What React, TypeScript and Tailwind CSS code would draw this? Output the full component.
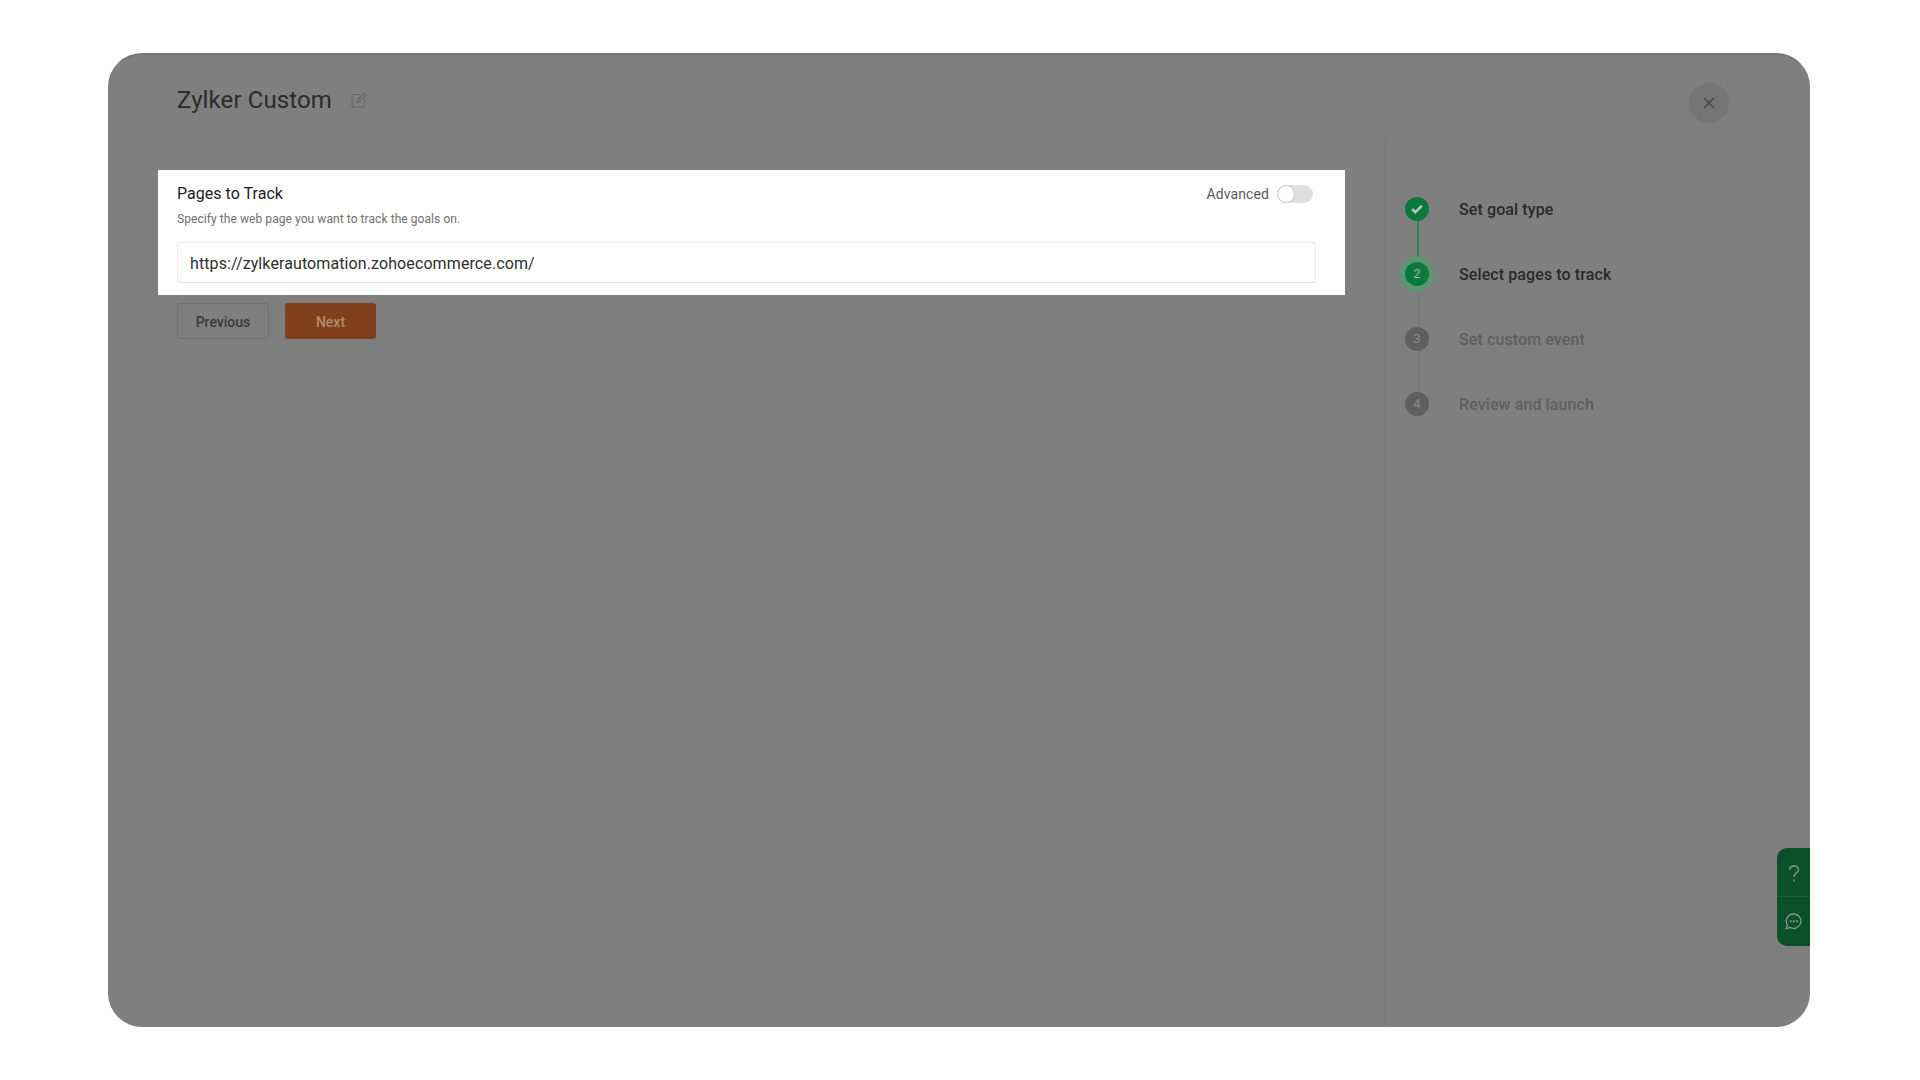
import React from "react";

const font = { fontFamily: "Roboto, 'Liberation Sans', sans-serif" };

function Step({ n, label, state, line }: { n: number; label: string; state: "done" | "active" | "todo"; line: "green" | "gray" | "none" }) {
  const circle = state === "todo" ? "bg-[#5f5f5f] text-[#8a8a8a]" : "bg-[#0a7a3c] text-[#9fbfa9]";
  return (
    <div className="relative flex h-[65px] items-center">
      {line === "green" && <div className="absolute left-[12px] top-[44px] h-[36px] w-[2px] bg-[#2f8655]" />}
      {line === "gray" && <div className="absolute left-[13px] top-[44px] h-[42px] w-px bg-[#747474]" />}
      {state === "active" ? (
        <div className="relative z-10 -mx-[6px] flex h-[36px] w-[36px] shrink-0 items-center justify-center rounded-full bg-[#5f9473]">
          <div className={`flex h-[24px] w-[24px] items-center justify-center rounded-full text-[13px] leading-none ${circle}`}>{n}</div>
        </div>
      ) : (
        <div className={`relative z-10 flex h-[24px] w-[24px] shrink-0 items-center justify-center rounded-full text-[13px] leading-none ${circle}`}>
          {state === "done" ? (
            <svg width="14" height="12" viewBox="0 0 14 12" fill="none">
              <path d="M2.2 6.2 L5.4 9.2 L11.8 2.8" stroke="#b5c9ba" strokeWidth="2.6" />
            </svg>
          ) : (
            n
          )}
        </div>
      )}
      <span className={`ml-[30px] mt-[2px] text-[16px] font-medium tracking-[0.1px] ${state === "todo" ? "text-[#5e5e5e]" : "text-[#2a2a2a]"}`}>{label}</span>
    </div>
  );
}

export default function App() {
  return (
    <div style={font} className="h-[1080px] w-[1920px] overflow-hidden bg-white pl-[108px] pt-[53px]">
      <div className="relative flex h-[974px] w-[1702px] flex-col overflow-hidden rounded-[34px] border-t-2 border-[#747474] bg-[#7f7f7f]">
        <header className="flex h-[84px] shrink-0 items-start justify-between border-b border-[#7c7c7c] pl-[69px] pr-[81px]">
          <div className="flex items-center pt-[31px]">
            <h1 className="text-[24px] font-normal leading-[28px] tracking-[0.1px] text-[#2c2c2c]">Zylker Custom</h1>
            <svg className="ml-[19px]" width="16" height="16" viewBox="0 0 16 16" fill="none" stroke="#686868" strokeWidth="1.2">
              <path d="M9 2.5H1.2V14.8H13.5V7" />
              <path d="M6 10.5 L6.6 8 L13.2 1.2 L15 3 L8.3 9.8 Z" />
            </svg>
          </div>
          <button className="mt-[28px] flex h-[40px] w-[40px] items-center justify-center rounded-full bg-[#757575]">
            <svg width="14" height="14" viewBox="0 0 14 14" stroke="#4a4a4a" strokeWidth="1.7">
              <path d="M2 2 L12 12 M12 2 L2 12" />
            </svg>
          </button>
        </header>

        <div className="flex min-h-0 flex-1">
          <main className="w-[1276px] shrink-0 pl-[50px] pt-[31px]">
            <section className="h-[125px] w-[1187px] bg-white pl-[19px] pr-[29px] pt-[13px]">
              <div className="flex items-start justify-between">
                <div>
                  <h2 className="text-[16px] font-normal leading-[22px] tracking-[0.03px] text-[#1d1d1d]">Pages to Track</h2>
                  <p className="mt-[6px] text-[12px] leading-[16px] tracking-[0.07px] text-[#6f6f6f]">Specify the web page you want to track the goals on.</p>
                </div>
                <div className="flex items-center pr-[3px]">
                  <span className="text-[14px] leading-[22px] tracking-[0.1px] text-[#5a5a5a]">Advanced</span>
                  <div className="ml-[8px] flex h-[18px] w-[36px] items-center rounded-full bg-[#dfdfdf]">
                    <div className="h-[18px] w-[18px] rounded-full border border-[#c9c9c9] bg-white" />
                  </div>
                </div>
              </div>
              <div className="mt-[15px] flex h-[41px] w-[1139px] items-center rounded-[3px] border border-[#ececec] border-b-[#e0e0e0] pl-[12px] pt-[2px] text-[16px] tracking-[0.1px] text-[#2f2f2f]">
                https://zylkerautomation.zohoecommerce.com/
              </div>
            </section>
            <div className="ml-[19px] mt-[8px] flex gap-[16px]">
              <button className="h-[36px] w-[92px] rounded-[3px] border border-[#717171] pt-[2px] text-[14px] font-medium text-[#3a3a3a]">Previous</button>
              <button className="h-[36px] w-[91px] rounded-[3px] bg-[#80401b] pt-[2px] text-[14px] font-medium text-[#b08a72]">Next</button>
            </div>
          </main>

          <aside className="flex-1 border-l border-[#787878] pl-[20px] pt-[37px]">
            <Step n={1} label="Set goal type" state="done" line="green" />
            <Step n={2} label="Select pages to track" state="active" line="gray" />
            <Step n={3} label="Set custom event" state="todo" line="gray" />
            <Step n={4} label="Review and launch" state="todo" line="none" />
          </aside>
        </div>

        <div className="absolute right-0 top-[793px] flex w-[33px] flex-col rounded-l-[10px] bg-[#0a5029]">
          <div className="flex h-[49px] items-center justify-center border-b border-[#1c5f38] pt-[3px]">
            <svg width="12" height="18" viewBox="0 0 12 18" fill="none" stroke="#7f9c8a" strokeWidth="1.4">
              <path d="M1.5 5 C1.5 2.5 3.4 1 6 1 C8.6 1 10.5 2.6 10.5 4.8 C10.5 7.8 6 8 6 12" />
              <path d="M6 14.5 V16.5" />
            </svg>
          </div>
          <div className="flex h-[49px] items-center justify-center">
            <svg width="17" height="17" viewBox="0 0 17 17" fill="none" stroke="#7f9c8a" strokeWidth="1.3">
              <path d="M8.8 1 A7.2 7.2 0 1 1 5 14.4 L1.2 15.8 L2.4 12 A7.2 7.2 0 0 1 8.8 1 Z" />
              <circle cx="5.6" cy="8.3" r="0.5" />
              <circle cx="8.8" cy="8.3" r="0.5" />
              <circle cx="12" cy="8.3" r="0.5" />
            </svg>
          </div>
        </div>
      </div>
    </div>
  );
}
